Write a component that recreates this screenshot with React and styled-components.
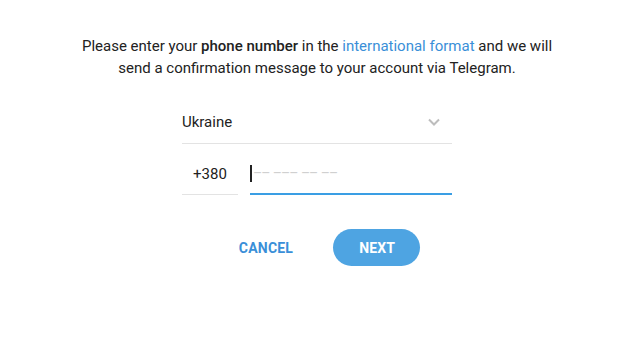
import React from "react"
import styled, { createGlobalStyle } from "styled-components"

const GlobalStyle = createGlobalStyle`
  body {
    margin: 0;
    background: #fff;
    font-family: Roboto, "Liberation Sans", sans-serif;
    color: #222;
  }
`

const Page = styled.div`
  display: flex;
  flex-direction: column;
  align-items: center;
  padding-top: 35px;
  padding-left: 4px;
`

const Intro = styled.p`
  margin: 0;
  width: 500px;
  text-align: center;
  font-size: 15px;
  line-height: 22px;
  color: #222;

  b {
    font-weight: 500;
  }
  a {
    color: #3a8fd8;
    text-decoration: none;
  }
`

const Form = styled.div`
  width: 270px;
  margin-top: 22px;
  display: flex;
  flex-direction: column;
`

const CountryRow = styled.div`
  display: flex;
  align-items: center;
  justify-content: space-between;
  height: 42px;
  border-bottom: 1px solid #e3e3e3;
  font-size: 15px;
  color: #222;
`

const Chevron = styled.svg`
  width: 14px;
  height: 14px;
  margin-right: 11px;
`

const PhoneRow = styled.div`
  display: flex;
  align-items: flex-end;
  gap: 12px;
  margin-top: 8px;
`

const Code = styled.div`
  width: 56px;
  height: 42px;
  display: flex;
  align-items: center;
  justify-content: center;
  font-size: 15px;
  border-bottom: 1px solid #e3e3e3;
  box-sizing: border-box;
`

const NumberField = styled.div`
  flex: 1;
  height: 43px;
  display: flex;
  align-items: center;
  border-bottom: 2px solid #3a9ee4;
  box-sizing: border-box;
  padding-top: 1px;
  font-size: 15px;
`

const Caret = styled.span`
  width: 2px;
  height: 17px;
  background: #222;
  margin-right: 1px;
`

const Placeholder = styled.span`
  color: #d0d0d0;
  font-size: 14px;
  letter-spacing: -1px;
  word-spacing: 1px;
`

const Actions = styled.div`
  display: flex;
  align-items: center;
  gap: 40px;
  margin-top: 34px;
  margin-left: 25px;
`

const Button = styled.button`
  border: none;
  font-family: inherit;
  font-size: 14px;
  font-weight: 700;
  letter-spacing: 0.2px;
  cursor: pointer;
  height: 37px;
  border-radius: 19px;
  padding: 0 ${(p) => (p.$primary ? "26px" : "0")};
  width: ${(p) => (p.$primary ? "87px" : "auto")};
  background: ${(p) => (p.$primary ? "#4ea4e2" : "transparent")};
  color: ${(p) => (p.$primary ? "#fff" : "#3a8fd8")};
`

export default function App() {
  return (
    <>
      <GlobalStyle />
      <Page>
        <Intro>
          Please enter your <b>phone number</b> in the{" "}
          <a href="#">international format</a> and we will send a confirmation
          message to your account via Telegram.
        </Intro>
        <Form>
          <CountryRow>
            <span>Ukraine</span>
            <Chevron viewBox="0 0 14 14">
              <path d="M2 4.5 L7 9.5 L12 4.5" fill="none" stroke="#bdbdbd" strokeWidth="2" />
            </Chevron>
          </CountryRow>
          <PhoneRow>
            <Code>+380</Code>
            <NumberField>
              <Caret />
              <Placeholder>–– ––– –– ––</Placeholder>
            </NumberField>
          </PhoneRow>
        </Form>
        <Actions>
          <Button>CANCEL</Button>
          <Button $primary>NEXT</Button>
        </Actions>
      </Page>
    </>
  )
}
